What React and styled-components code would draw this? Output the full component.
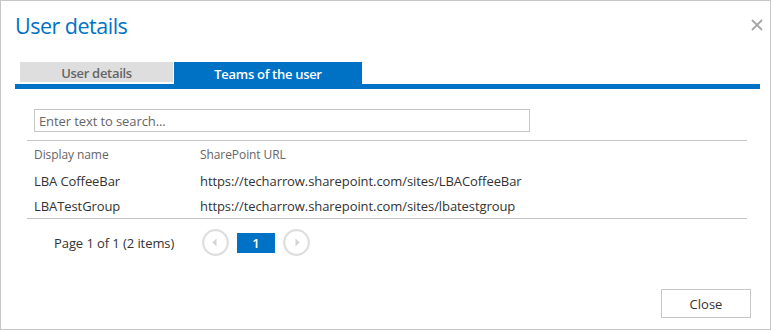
import React from "react";
import styled, { createGlobalStyle } from "styled-components";

const GlobalStyle = createGlobalStyle`
  html, body {
    margin: 0;
    padding: 0;
    background: #ffffff;
  }
  body {
    font-family: "Segoe UI", "Open Sans", "Noto Sans", sans-serif;
  }
`;

const teams = [
  { name: "LBA CoffeeBar", url: "https://techarrow.sharepoint.com/sites/LBACoffeeBar" },
  { name: "LBATestGroup", url: "https://techarrow.sharepoint.com/sites/lbatestgroup" },
];

function CloseIcon() {
  return (
    <svg width="12" height="12" viewBox="0 0 12 12">
      <path d="M1 1 L11 11 M11 1 L1 11" stroke="#a6a6a6" strokeWidth="1.8" fill="none" />
    </svg>
  );
}

function Arrow({ dir }) {
  return (
    <svg width="27" height="27" viewBox="0 0 27 27">
      <circle cx="13.5" cy="13.5" r="12.3" fill="none" stroke="#dedede" strokeWidth="2.2" />
      {dir === "left" ? (
        <path d="M10.5 13.5 L14.5 9.5 L14.5 17.5 Z" fill="#d4d4d4" />
      ) : (
        <path d="M16.5 13.5 L12.5 9.5 L12.5 17.5 Z" fill="#d4d4d4" />
      )}
    </svg>
  );
}

function App() {
  return (
    <>
      <GlobalStyle />
      <Dialog>
        <Header>
          <Title>User details</Title>
          <CloseButton aria-label="close">
            <CloseIcon />
          </CloseButton>
        </Header>
        <TabStrip>
          <Tab>User details</Tab>
          <Tab active>Teams of the user</Tab>
        </TabStrip>
        <Body>
          <Search placeholder="Enter text to search..." />
          <Grid>
            <HeadRow>
              <NameCell>Display name</NameCell>
              <Cell>SharePoint URL</Cell>
            </HeadRow>
            {teams.map((t) => (
              <Row key={t.name}>
                <NameCell>{t.name}</NameCell>
                <Cell>{t.url}</Cell>
              </Row>
            ))}
          </Grid>
          <Pager>
            <PageInfo>Page 1 of 1 (2 items)</PageInfo>
            <PagerButtons>
              <ArrowButton>
                <Arrow dir="left" />
              </ArrowButton>
              <PageNumber>1</PageNumber>
              <ArrowButton>
                <Arrow dir="right" />
              </ArrowButton>
            </PagerButtons>
          </Pager>
        </Body>
        <Footer>
          <FooterButton>Close</FooterButton>
        </Footer>
      </Dialog>
    </>
  );
}

export default App;

const Dialog = styled.div`
  box-sizing: border-box;
  width: 771px;
  height: 330px;
  border: 1px solid #c6c6c6;
  background: #fff;
  display: flex;
  flex-direction: column;
`;

const Header = styled.div`
  display: flex;
  align-items: flex-start;
  justify-content: space-between;
  padding: 11px 7px 0 14px;
  height: 50px;
  box-sizing: border-box;
`;

const Title = styled.h1`
  margin: 0;
  font-size: 21.5px;
  font-weight: 400;
  letter-spacing: -0.5px;
  line-height: 28px;
  color: #0072c6;
`;

const CloseButton = styled.button`
  border: none;
  background: none;
  padding: 0;
  margin-top: 7px;
  width: 12px;
  height: 12px;
  display: flex;
  cursor: pointer;
`;

const TabStrip = styled.div`
  display: flex;
  gap: 1px;
  align-items: flex-end;
  margin: 11px 10px 0 14px;
  padding-left: 5px;
  border-bottom: 5px solid #0072c6;
`;

const Tab = styled.div`
  box-sizing: border-box;
  width: ${(p) => (p.active ? "188px" : "153px")};
  height: ${(p) => (p.active ? "22px" : "20px")};
  margin-bottom: ${(p) => (p.active ? "0" : "2px")};
  background: ${(p) => (p.active ? "#0072c6" : "#dedede")};
  color: ${(p) => (p.active ? "#ffffff" : "#666666")};
  font-size: 13px;
  font-weight: 600;
  letter-spacing: -0.3px;
  display: flex;
  align-items: flex-end;
  justify-content: center;
  padding-bottom: ${(p) => (p.active ? "1px" : "0")};
  line-height: 18px;
`;

const Body = styled.div`
  padding: 20px 23px 0 26px;
  letter-spacing: -0.08px;
`;

const Search = styled.input`
  box-sizing: border-box;
  display: block;
  width: 496px;
  height: 23px;
  margin-left: 7px;
  border: 1px solid #c6c6c6;
  padding: 0 4px;
  font-family: inherit;
  font-size: 13px;
  letter-spacing: -0.1px;
  color: #333;
  outline: none;

  &::placeholder {
    color: #666666;
  }
`;

const Grid = styled.div`
  margin-top: 8px;
  border-top: 1px solid #c6c6c6;
  border-bottom: 1px solid #c6c6c6;
  width: 720px;
`;

const Row = styled.div`
  display: flex;
  align-items: center;
  height: 25px;
  font-size: 13px;
  color: #333333;
`;

const HeadRow = styled(Row)`
  height: 27px;
  font-size: 12px;
  color: #666666;
`;

const Cell = styled.div`
  white-space: nowrap;
`;

const NameCell = styled(Cell)`
  width: 166px;
  padding-left: 7px;
`;

const Pager = styled.div`
  display: flex;
  align-items: center;
  margin-top: 10px;
  padding-left: 27px;
`;

const PageInfo = styled.span`
  font-size: 13px;
  color: #333333;
  width: 148px;
`;

const PagerButtons = styled.div`
  display: flex;
  align-items: center;
  gap: 8px;
`;

const ArrowButton = styled.div`
  width: 27px;
  height: 27px;
  display: flex;
`;

const PageNumber = styled.div`
  width: 38px;
  height: 20px;
  background: #0072c6;
  color: #fff;
  font-size: 13px;
  font-weight: 600;
  display: flex;
  align-items: center;
  justify-content: center;
`;

const Footer = styled.div`
  margin-top: auto;
  display: flex;
  justify-content: flex-end;
  padding: 0 19px 11px 0;
`;

const FooterButton = styled.button`
  box-sizing: border-box;
  width: 90px;
  height: 29px;
  background: #fff;
  border: 1px solid #c6c6c6;
  font-family: inherit;
  font-size: 13px;
  color: #333333;
  cursor: pointer;
`;
